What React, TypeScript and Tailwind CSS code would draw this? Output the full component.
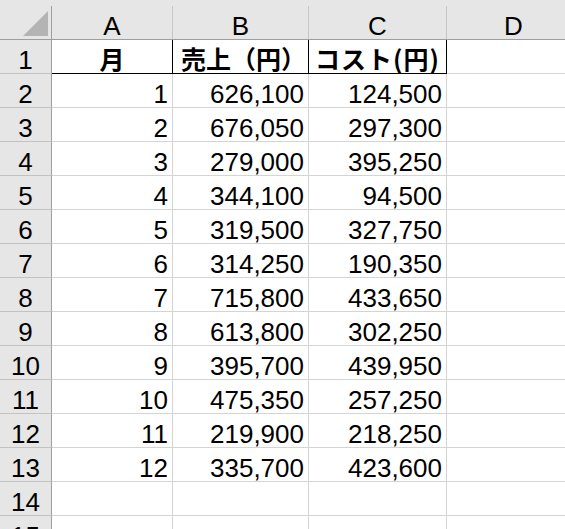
import React from "react";

const rows: [string, string, string][] = [
  ["1", "626,100", "124,500"],
  ["2", "676,050", "297,300"],
  ["3", "279,000", "395,250"],
  ["4", "344,100", "94,500"],
  ["5", "319,500", "327,750"],
  ["6", "314,250", "190,350"],
  ["7", "715,800", "433,650"],
  ["8", "613,800", "302,250"],
  ["9", "395,700", "439,950"],
  ["10", "475,350", "257,250"],
  ["11", "219,900", "218,250"],
  ["12", "335,700", "423,600"],
  ["", "", ""],
  ["", "", ""],
];

const rh =
  "w-[52px] shrink-0 h-full bg-[#e6e6e6] border-r border-r-[#9e9e9e] border-b border-b-[#c2c2c2] flex items-end justify-center";
const grid = "shrink-0 h-full border-r border-b border-[#d4d4d4] flex items-end";
const jp = "font-['Noto_Sans_CJK_JP',sans-serif] font-bold text-[25px] leading-[25px] text-black";

export default function App() {
  return (
    <div className="w-[565px] h-[529px] overflow-hidden bg-white font-['Liberation_Sans',Arial,sans-serif] text-[26px] leading-[26px] text-black">
      {/* column header */}
      <div className="flex h-[40px] pt-[6px] bg-[#e6e6e6] border-b border-[#9e9e9e]">
        <div className="w-[52px] shrink-0 h-full border-r border-[#9e9e9e] flex items-end justify-end pr-[3px] pb-[3px]">
          <svg width="25" height="25" viewBox="0 0 25 25">
            <polygon points="25,0 25,25 0,25" fill="#b4b4b4" />
          </svg>
        </div>
        <div className="w-[121px] shrink-0 h-full border-r border-[#c6c6c6] flex items-end justify-center">A</div>
        <div className="w-[136px] shrink-0 h-full border-r border-[#c6c6c6] flex items-end justify-center">B</div>
        <div className="w-[138px] shrink-0 h-full border-r border-[#c6c6c6] flex items-end justify-center">C</div>
        <div className="w-[134px] shrink-0 h-full border-r border-[#c6c6c6] flex items-end justify-center">D</div>
      </div>

      {/* row 1 */}
      <div className="flex h-[34px]">
        <div className={rh}>1</div>
        <div className="w-[121px] shrink-0 h-full border-r border-b border-black flex items-end justify-center pb-[2px]">
          <span className={jp}>月</span>
        </div>
        <div className="w-[136px] shrink-0 h-full border-r border-b border-black flex items-end justify-center pb-[2px] pl-[6px] overflow-visible">
          <span className={jp + " whitespace-nowrap"}>売上（円）</span>
        </div>
        <div className="w-[138px] shrink-0 h-full border-r border-b border-black flex items-end justify-center pb-[2px]">
          <span className={jp + " whitespace-nowrap tracking-[1px]"}>コスト(円)</span>
        </div>
        <div className={grid + " w-[134px]"}></div>
      </div>

      {rows.map((r, i) => (
        <div key={i} className="flex h-[34px]">
          <div className={rh}>{i + 2}</div>
          <div className={grid + " w-[121px] justify-end pr-[4px]"}>{r[0]}</div>
          <div className={grid + " w-[136px] justify-end pr-[4px]"}>{r[1]}</div>
          <div className={grid + " w-[138px] justify-end pr-[4px]"}>{r[2]}</div>
          <div className={grid + " w-[134px]"}></div>
        </div>
      ))}
    </div>
  );
}
